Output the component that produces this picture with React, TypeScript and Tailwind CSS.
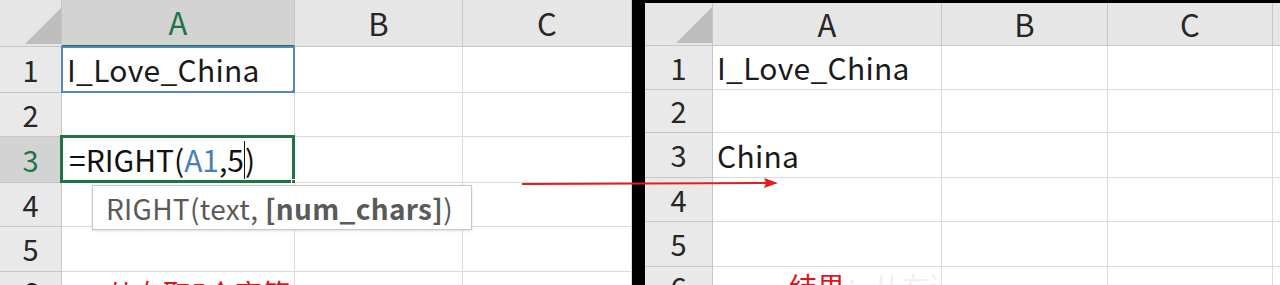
import type { ReactNode } from 'react';

const font = { fontFamily: '"Noto Sans CJK SC", "Noto Sans", sans-serif' };

function Corner({ className }: { className: string }) {
  return (
    <div className={`flex items-end justify-end border-r border-b border-[#c6c6c6] bg-[#e6e6e6] ${className}`}>
      <svg width="36" height="36" viewBox="0 0 36 36">
        <polygon points="36,0 36,36 0,36" fill="#bdbdbd" />
      </svg>
    </div>
  );
}

function ColHead({ children, active }: { children: ReactNode; active?: boolean }) {
  return active ? (
    <div className="flex items-center justify-center border-r border-b-2 border-r-[#c6c6c6] border-b-[#217346] bg-[#d3d3d3] text-[31px] text-[#217346]">
      {children}
    </div>
  ) : (
    <div className="flex items-center justify-center border-r border-b border-[#c6c6c6] bg-[#e6e6e6] text-[31px] text-[#262626]">
      {children}
    </div>
  );
}

function RowHead({ n, active }: { n: number; active?: boolean }) {
  return (
    <div
      className={
        active
          ? 'flex items-center justify-center border-r border-b border-[#c6c6c6] bg-[#d3d3d3] text-[29px] text-[#217346]'
          : 'flex items-center justify-center border-r border-b border-[#c6c6c6] bg-[#e9e9e9] text-[29px] text-[#262626]'
      }
    >
      {n}
    </div>
  );
}

function Cell({ children, className = '' }: { children?: ReactNode; className?: string }) {
  return (
    <div className={`relative flex items-center border-r border-b border-[#dadada] bg-white text-[30px] tracking-[0.3px] text-[#1a1a1a] ${className}`}>
      {children}
    </div>
  );
}

function LeftSheet() {
  return (
    <div className="relative w-[632px] shrink-0 overflow-hidden">
      <div className="grid grid-cols-[62px_233px_168px_169px] grid-rows-[47px_46px_44px_46px_44px_45px_40px]">
        <Corner className="pb-[2px]" />
        <ColHead active>A</ColHead>
        <ColHead>B</ColHead>
        <ColHead>C</ColHead>

        <RowHead n={1} />
        <Cell className="bg-[#e8eef8]">
          <div className="pointer-events-none absolute -top-px -left-px -right-px -bottom-px border-2 border-[#5b84c4]" />
          <div className="absolute -right-[3px] -bottom-[3px] h-[5px] w-[5px] bg-[#5b84c4]" />
          <span className="pl-[5px]">I_Love_China</span>
        </Cell>
        <Cell />
        <Cell />

        <RowHead n={2} />
        <Cell />
        <Cell />
        <Cell />

        <RowHead n={3} active />
        <Cell>
          <div className="pointer-events-none absolute -top-[2px] -left-[2px] -right-px -bottom-px border-[3px] border-[#217346]" />
          <div className="absolute -right-[3px] -bottom-[3px] h-[6px] w-[6px] border border-white bg-[#217346]" />
          <span className="flex items-center pl-[7px] tracking-normal text-[#111]">
            =RIGHT(<span className="text-[#4a7ebb]">A1</span>,5
            <span className="inline-block h-[38px] w-px bg-[#111]" />)
          </span>
        </Cell>
        <Cell />
        <Cell />

        <RowHead n={4} />
        <Cell />
        <Cell />
        <Cell />

        <RowHead n={5} />
        <Cell />
        <Cell />
        <Cell />

        <RowHead n={6} />
        <Cell className="items-start">
          <span className="pl-[45px] pt-[7px] text-[28px] leading-none tracking-normal whitespace-nowrap text-[#e0141e]">从右取5个字符</span>
        </Cell>
        <Cell />
        <Cell />
      </div>

      <div className="absolute left-[92px] top-[185px] flex h-[45px] w-[380px] items-center border border-[#c8c8c8] bg-white pl-[13px] text-[28px] tracking-[0.3px] text-[#5a5a5a] shadow-sm">
        RIGHT(text,&nbsp;<b>[num_chars]</b>)
      </div>
    </div>
  );
}

function RightSheet() {
  return (
    <div className="flex-1 overflow-hidden border-t-[3px] border-black">
      <div className="grid grid-cols-[68px_229px_166px_165px_20px] grid-rows-[43px_44px_43px_45px_44px_45px_40px]">
        <Corner className="pb-[2px]" />
        <ColHead>A</ColHead>
        <ColHead>B</ColHead>
        <ColHead>C</ColHead>
        <ColHead> </ColHead>

        {[1, 2, 3, 4, 5, 6].map((n) => (
          <RowCells key={n} n={n} />
        ))}
      </div>
    </div>
  );
}

function RowCells({ n }: { n: number }) {
  return (
    <>
      <RowHead n={n} />
      <Cell className={n === 6 ? 'items-start' : ''}>
        {n === 1 && <span className="pl-[4px]">I_Love_China</span>}
        {n === 3 && <span className="pl-[4px]">China</span>}
        {n === 6 && (
          <span className="pl-[76px] pt-[5px] text-[28px] leading-none tracking-normal whitespace-nowrap text-[#e0141e]">
            结果<span className="text-[#f0f0f0]">：从右边提取5个字符</span>
          </span>
        )}
      </Cell>
      <Cell />
      <Cell />
      <Cell />
    </>
  );
}

export default function App() {
  return (
    <div className="relative flex h-[285px] w-[1280px] overflow-hidden bg-white" style={font}>
      <LeftSheet />
      <div className="w-[13px] shrink-0 bg-black" />
      <RightSheet />
      <svg className="absolute left-[520px] top-[176px]" width="262" height="14" viewBox="0 0 262 14">
        <line x1="2" y1="8" x2="248" y2="7" stroke="#e01e1e" strokeWidth="2" />
        <polygon points="258,7 244,2 246,7 244,12" fill="#e01e1e" />
      </svg>
    </div>
  );
}
